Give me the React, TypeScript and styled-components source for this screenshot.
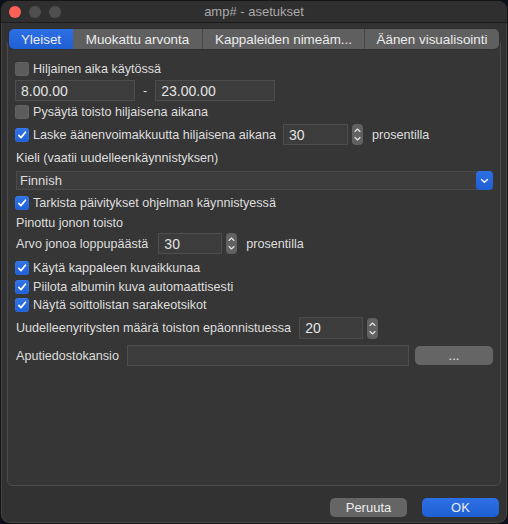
import styled, { createGlobalStyle } from 'styled-components'

const GlobalStyle = createGlobalStyle`
  html, body {
    margin: 0;
    padding: 0;
    background: #0b0f1c;
  }
  * { box-sizing: border-box; }
`

const Window = styled.div`
  width: 508px;
  height: 524px;
  background: #323232;
  border-radius: 10px;
  border: 1px solid #151515;
  box-shadow: inset 0 0 0 1px #444;
  display: flex;
  flex-direction: column;
  overflow: hidden;
  font-family: 'Liberation Sans', Arial, sans-serif;
  font-size: 12.6px;
  color: #dedede;
`

const TitleBar = styled.div`
  height: 22px;
  flex: none;
  position: relative;
  display: flex;
  align-items: center;
  justify-content: center;
  background: #2f2f2f;
  border-bottom: 1px solid #1c1c1c;
  color: #a9a9a9;
  font-size: 13px;
`

const Lights = styled.div`
  position: absolute;
  left: 8px;
  top: 5px;
  display: flex;
  gap: 8px;
`

const Light = styled.span<{ $color: string }>`
  width: 12px;
  height: 12px;
  border-radius: 50%;
  background: ${p => p.$color};
`

const Body = styled.div`
  flex: 1;
  display: flex;
  flex-direction: column;
  padding: 6px 6px 0 6px;
`

const TabBar = styled.div`
  position: relative;
  z-index: 1;
  display: flex;
  margin: 0 2px 0 2px;
  height: 20px;
  border-radius: 5px;
  overflow: hidden;
  box-shadow: 0 0 0 0.5px #2a2a2a;
`

const Tab = styled.div<{ $active?: boolean; $w: number }>`
  width: ${p => p.$w}px;
  display: flex;
  align-items: center;
  justify-content: center;
  color: #ececec;
  font-size: 13.4px;
  background: ${p => p.$active ? 'linear-gradient(#2d6fe4, #1f5fd4)' : '#5f5f5f'};
  border-left: ${p => p.$active ? 'none' : '1px solid #474747'};
  &:nth-child(2) { border-left: none; }
`

const Pane = styled.div`
  margin-top: -10px;
  height: 447px;
  background: #363636;
  border: 1px solid #4c4c4c;
  border-radius: 5px;
  padding: 19px 7px 0 8px;
  display: flex;
  flex-direction: column;
`

const Row = styled.div<{ $h: number; $mt?: number }>`
  height: ${p => p.$h}px;
  margin-top: ${p => p.$mt ?? 0}px;
  display: flex;
  align-items: center;
  white-space: nowrap;
`

const Check = styled.span<{ $on?: boolean }>`
  width: 14px;
  height: 14px;
  flex: none;
  border-radius: 3px;
  margin-right: 4px;
  margin-left: -1px;
  display: flex;
  align-items: center;
  justify-content: center;
  background: ${p => p.$on ? 'linear-gradient(#3075e8, #1f60d6)' : '#5c5c5c'};
  box-shadow: inset 0 0 0 0.5px rgba(255,255,255,0.08);
`

const Label = styled.span<{ $ml?: number; $mr?: number }>`
  margin-left: ${p => p.$ml ?? 0}px;
  margin-right: ${p => p.$mr ?? 0}px;
  color: #dedede;
`

const Field = styled.div<{ $w?: number; $h: number; $ml?: number }>`
  width: ${p => p.$w ? `${p.$w}px` : 'auto'};
  flex: ${p => p.$w ? 'none' : '1'};
  height: ${p => p.$h}px;
  margin-left: ${p => p.$ml ?? 0}px;
  background: #3c3c3c;
  border: 1px solid #4d4d4d;
  display: flex;
  align-items: center;
  padding-left: 5px;
  font-size: 14px;
  color: #e4e4e4;
`

const Stepper = styled.span<{ $ml?: number }>`
  width: 11px;
  height: 21px;
  margin-left: ${p => p.$ml ?? 4}px;
  margin-right: 9px;
  flex: none;
  border-radius: 4px;
  background: #616161;
  display: flex;
  align-items: center;
  justify-content: center;
`

const Select = styled.div`
  height: 19px;
  margin-top: 3px;
  display: flex;
  align-items: center;
  background: #3d3d3d;
  border: 1px solid #4a4a4a;
  border-right: none;
  border-radius: 0 5px 5px 0;
  padding-left: 3px;
  font-size: 13px;
`

const SelectText = styled.span`
  flex: 1;
`

const SelectButton = styled.span`
  width: 17px;
  height: 19px;
  border-radius: 4px;
  background: linear-gradient(#2d6fe4, #1f5fd4);
  display: flex;
  align-items: center;
  justify-content: center;
`

const Button = styled.div<{ $w: number; $primary?: boolean; $ml?: number }>`
  width: ${p => p.$w}px;
  height: 19px;
  margin-left: ${p => p.$ml ?? 0}px;
  flex: none;
  border-radius: 5px;
  display: flex;
  align-items: center;
  justify-content: center;
  font-size: 13px;
  color: #ececec;
  background: ${p => p.$primary ? 'linear-gradient(#2d6fe4, #1f5fd4)' : '#656565'};
`

const Footer = styled.div`
  display: flex;
  justify-content: flex-end;
  padding: 12px 2px 0 0;
`

const Tick = () => (
  <svg width="10" height="10" viewBox="0 0 10 10">
    <path d="M1.8 5.3 L4 7.6 L8.4 2.2" fill="none" stroke="#fff" strokeWidth="1.7" strokeLinecap="round" strokeLinejoin="round" />
  </svg>
)

const Chevrons = () => (
  <svg width="7" height="15" viewBox="0 0 7 15">
    <path d="M1 4.5 L3.5 2 L6 4.5 M1 10.5 L3.5 13 L6 10.5" fill="none" stroke="#e8e8e8" strokeWidth="1.1" strokeLinecap="round" strokeLinejoin="round" />
  </svg>
)

const ChevronDown = () => (
  <svg width="9" height="6" viewBox="0 0 9 6">
    <path d="M1.5 1.5 L4.5 4.3 L7.5 1.5" fill="none" stroke="#fff" strokeWidth="1.4" strokeLinecap="round" strokeLinejoin="round" />
  </svg>
)

function CheckRow({ on, text, h = 20, mt = 0 }: { on?: boolean; text: string; h?: number; mt?: number }) {
  return (
    <Row $h={h} $mt={mt}>
      <Check $on={on}>{on && <Tick />}</Check>
      <Label>{text}</Label>
    </Row>
  )
}

export default function App() {
  return (
    <>
      <GlobalStyle />
      <Window>
        <TitleBar>
          <Lights>
            <Light $color="#fe5f57" />
            <Light $color="#4f4f4f" />
            <Light $color="#4f4f4f" />
          </Lights>
          amp# - asetukset
        </TitleBar>
        <Body>
          <TabBar>
            <Tab $active $w={64}>Yleiset</Tab>
            <Tab $w={129}>Muokattu arvonta</Tab>
            <Tab $w={162}>Kappaleiden nimeäm...</Tab>
            <Tab $w={135}>Äänen visualisointi</Tab>
          </TabBar>
          <Pane>
            <CheckRow text="Hiljainen aika käytössä" />
            <Row $h={21} $mt={1}>
              <Field $w={120} $h={21} style={{ marginLeft: -1 }}>8.00.00</Field>
              <Label $ml={8} $mr={8}>-</Label>
              <Field $w={120} $h={21}>23.00.00</Field>
            </Row>
            <CheckRow text="Pysäytä toisto hiljaisena aikana" mt={1} />
            <Row $h={23} $mt={1}>
              <Check $on><Tick /></Check>
              <Label>Laske äänenvoimakkuutta hiljaisena aikana</Label>
              <Field $w={65} $h={21} $ml={7}>30</Field>
              <Stepper><Chevrons /></Stepper>
              <Label>prosentilla</Label>
            </Row>
            <Row $h={20} $mt={2}>
              <Label>Kieli (vaatii uudelleenkäynnistyksen)</Label>
            </Row>
            <Select>
              <SelectText>Finnish</SelectText>
              <SelectButton><ChevronDown /></SelectButton>
            </Select>
            <CheckRow on text="Tarkista päivitykset ohjelman käynnistyessä" mt={3} />
            <Row $h={20}>
              <Label>Pinottu jonon toisto</Label>
            </Row>
            <Row $h={21}>
              <Label>Arvo jonoa loppupäästä</Label>
              <Field $w={64} $h={21} $ml={10}>30</Field>
              <Stepper><Chevrons /></Stepper>
              <Label>prosentilla</Label>
            </Row>
            <CheckRow on text="Käytä kappaleen kuvaikkunaa" h={18} mt={5} />
            <CheckRow on text="Piilota albumin kuva automaattisesti" h={19} />
            <CheckRow on text="Näytä soittolistan sarakeotsikot" h={18} />
            <Row $h={22} $mt={3}>
              <Label>Uudelleenyritysten määrä toiston epäonnistuessa</Label>
              <Field $w={64} $h={22} $ml={8}>20</Field>
              <Stepper><Chevrons /></Stepper>
            </Row>
            <Row $h={21} $mt={6}>
              <Label>Aputiedostokansio</Label>
              <Field $h={21} $ml={8} />
              <Button $w={78} $ml={6}>...</Button>
            </Row>
          </Pane>
          <Footer>
            <Button $w={77}>Peruuta</Button>
            <Button $w={77} $primary $ml={15}>OK</Button>
          </Footer>
        </Body>
      </Window>
    </>
  )
}
